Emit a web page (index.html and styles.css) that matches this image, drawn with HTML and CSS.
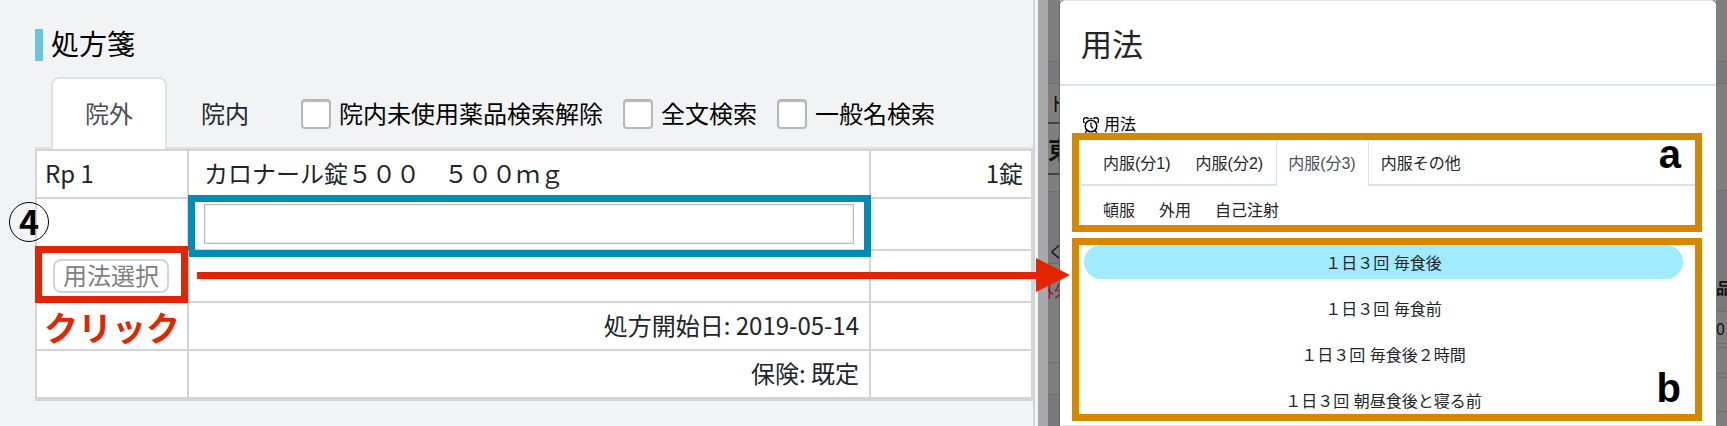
FILE: index.html
```html
<!DOCTYPE html>
<html lang="ja">
<head>
<meta charset="utf-8">
<title>処方箋</title>
<link rel="stylesheet" href="styles.css">
</head>
<body>
<div class="page">
  <section class="rx">
    <h1 class="rx-title">処方箋</h1>
    <div class="rx-bar">
      <div class="rx-tabs" role="tablist">
        <button class="rx-tab rx-tab-active" type="button" role="tab" aria-selected="true">院外</button>
        <button class="rx-tab" type="button" role="tab" aria-selected="false">院内</button>
      </div>
      <div class="checks">
        <label class="check"><input type="checkbox"><span>院内未使用薬品検索解除</span></label>
        <label class="check"><input type="checkbox"><span>全文検索</span></label>
        <label class="check"><input type="checkbox"><span>一般名検索</span></label>
      </div>
    </div>
    <table class="rx-table">
      <colgroup><col class="col-rp"><col><col class="col-amount"></colgroup>
      <tbody>
        <tr><td>Rp 1</td><td class="drug">カロナール錠５００　５００ｍｇ</td><td class="right">1錠</td></tr>
        <tr class="tall"><td></td><td class="drug marked"><input class="drug-input" type="text" aria-label="薬品検索"><span class="frame frame-blue"></span></td><td></td></tr>
        <tr class="tall"><td class="usage-cell marked"><button class="usage-button" type="button">用法選択</button><span class="frame frame-red"></span></td><td></td><td></td></tr>
        <tr><td class="marked"><strong class="click-note">クリック</strong></td><td class="right detail">処方開始日: 2019-05-14</td><td></td></tr>
        <tr><td></td><td class="right detail">保険: 既定</td><td></td></tr>
      </tbody>
    </table>
    <span class="step">4</span>
    <span class="arrow"></span>
  </section>
  <section class="overlay">
    <div class="strip strip-left" aria-hidden="true">
      <span class="seg h62"></span>
      <span class="seg seg-cool h22"></span>
      <span class="seg seg-line h40 size20">ト</span>
      <span class="seg seg-line h51 size24">東</span>
      <span class="seg h17"></span>
      <span class="seg seg-cool seg-end h72">く</span>
      <span class="seg seg-red h99">外外</span>
      <span class="seg h32"></span>
      <span class="seg seg-cool seg-rest"></span>
    </div>
    <div class="modal" role="dialog" aria-labelledby="usage-title">
      <h2 class="modal-title" id="usage-title">用法</h2>
      <div class="modal-body">
        <div class="usage-label">
          <svg class="alarm" viewBox="0 0 16 16" fill="none" stroke="currentColor" stroke-linecap="round">
            <circle cx="8" cy="9" r="5.8" stroke-width="1.5"/>
            <path d="M8 5.8V9.2L9.6 11" stroke-width="1.3"/>
            <path d="M1.2 5.4A2.5 2.5 0 0 1 5.2 1.5M14.8 5.4A2.5 2.5 0 0 0 10.8 1.5M3.9 13.3L2.6 15.3M12.1 13.3L13.4 15.3" stroke-width="1.4"/>
            <path d="M7 1.4H9" stroke-width="1"/>
          </svg>
          用法
        </div>
        <div class="group group-tabs">
          <div class="usage-tabs usage-tabs-top">
            <button class="usage-tab" type="button">内服(分1)</button>
            <button class="usage-tab" type="button">内服(分2)</button>
            <button class="usage-tab usage-tab-active" type="button">内服(分3)</button>
            <button class="usage-tab" type="button">内服その他</button>
          </div>
          <div class="usage-tabs usage-tabs-more">
            <button class="usage-tab" type="button">頓服</button>
            <button class="usage-tab" type="button">外用</button>
            <button class="usage-tab" type="button">自己注射</button>
          </div>
          <b class="mark mark-a">a</b>
        </div>
        <div class="group group-list">
          <button class="usage usage-active" type="button">１日３回 毎食後</button>
          <button class="usage" type="button">１日３回 毎食前</button>
          <button class="usage" type="button">１日３回 毎食後２時間</button>
          <button class="usage" type="button">１日３回 朝昼食後と寝る前</button>
          <b class="mark mark-b">b</b>
        </div>
      </div>
    </div>
    <div class="strip strip-right" aria-hidden="true">
      <span class="seg h62"></span>
      <span class="seg seg-cool h22"></span>
      <span class="seg h107"></span>
      <span class="seg seg-cool seg-end seg-bold h121">品名</span>
      <span class="seg h32">0</span>
      <span class="seg h4"></span>
      <span class="seg h26"></span>
      <span class="seg h4"></span>
      <span class="seg h34"></span>
      <span class="seg seg-rest"></span>
    </div>
  </section>
</div>
</body>
</html>
```

FILE: styles.css
```css
* {
  box-sizing: border-box;
}

body {
  margin: 0;
  background: #f1f3f5;
  color: #212529;
  font-family: "Noto Sans CJK JP", sans-serif;
  font-size: 24px;
}

button {
  margin: 0;
  border: 0;
  padding: 0;
  background: none;
  color: inherit;
  font: inherit;
}

.page {
  display: grid;
  grid-template-columns: minmax(0, 1035fr) minmax(0, 689fr);
  column-gap: 3px;
  min-height: 100vh;
}

/* Prescription */

.rx {
  position: relative;
  z-index: 1;
  padding: 29px 0 25px 35px;
  border-right: 2px solid #ced4da;
}

.rx-title {
  margin: 0 0 16px;
  border-left: 8px solid #6ac6e0;
  padding: 0 0 4px 8px;
  color: #000;
  font-size: 28px;
  font-weight: 400;
  line-height: 28px;
}

.rx-bar {
  display: flex;
  gap: 18px;
  height: 72px;
  padding-left: 16px;
  border-bottom: 2px solid #dee2e6;
}

.rx-tabs {
  display: flex;
  height: 72px;
}

.rx-tab {
  border: 2px solid transparent;
  border-bottom: 0;
  border-radius: 8px 8px 0 0;
  padding: 0 32px 4px;
  white-space: nowrap;
}

.rx-tab-active {
  border-color: #dee2e6;
  background: #fff;
  color: #495057;
}

.checks {
  display: flex;
  align-items: center;
  gap: 20px;
  height: 74px;
  color: #000;
}

.check {
  display: flex;
  align-items: center;
  gap: 8px;
  white-space: nowrap;
}

.check span {
  padding-bottom: 4px;
}

.check input {
  appearance: none;
  width: 30px;
  height: 30px;
  margin: 0;
  border: 2px solid #b5b7b9;
  border-radius: 4px;
  background: #fff;
  box-shadow: inset 0 1px 1px #b5b7b9;
}

.rx-table {
  width: 100%;
  table-layout: fixed;
  border-collapse: separate;
  border-spacing: 0;
  border: solid #d4d4d4;
  border-width: 2px 0 2px 2px;
  background: #fff;
  line-height: 32px;
}

.col-rp {
  width: 152px;
}

.col-amount {
  width: 162px;
}

.rx-table td {
  height: 48px;
  padding: 0 8px 2px;
  border: solid #d4d4d4;
  border-width: 0 2px 2px 0;
  white-space: nowrap;
}

.rx-table .tall td {
  height: 52px;
  padding-bottom: 0;
}

.rx-table .drug {
  padding-right: 15px;
  padding-left: 15px;
}

.rx-table .right {
  text-align: right;
}

.rx-table .detail {
  padding-right: 10px;
}

.rx-table .usage-cell {
  padding-left: 16px;
}

.marked {
  position: relative;
}

.drug-input {
  display: block;
  width: 100%;
  height: 40px;
  border: 1px solid #bbb;
  padding: 0 8px;
  font: inherit;
  box-shadow: inset 0 0 0 1px #eee;
}

.usage-button {
  display: block;
  height: 34px;
  border: 2px solid #ced4da;
  border-radius: 8px;
  padding: 0 8px 2px;
  color: #808080;
  line-height: 28px;
}

.frame {
  position: absolute;
  border: 7px solid;
  pointer-events: none;
}

.frame-blue {
  inset: -4px -2px -8px -1px;
  border-color: #008cb7;
}

.frame-red {
  inset: -5px -1px -2px -2px;
  border-color: #e32400;
}

.click-note {
  position: absolute;
  top: 0;
  left: 7px;
  color: #e32400;
  font-size: 34px;
  line-height: 48px;
}

.step {
  position: absolute;
  top: 202px;
  left: 9px;
  width: 40px;
  height: 40px;
  border: 1px solid #000;
  border-radius: 50%;
  color: #000;
  font-size: 34px;
  font-weight: 700;
  line-height: 36px;
  text-align: center;
}

.arrow {
  position: absolute;
  top: 258px;
  right: -37px;
  left: 197px;
  height: 34px;
  background: #e32400;
  clip-path: polygon(0 14px, calc(100% - 34px) 14px, calc(100% - 34px) 0, 100% 17px, calc(100% - 34px) 100%, calc(100% - 34px) 21px, 0 21px);
}

/* Dimmed page behind the dialog */

.overlay {
  display: grid;
  grid-template-columns: 22px minmax(0, 1fr) 11px;
  background: #fff;
}

.strip {
  display: flex;
  flex-direction: column;
  overflow: hidden;
  background: #7f7f7f;
  color: #111;
  font-size: 16px;
}

.strip-left {
  border-left: 10px solid #a9a9a9;
}

.seg {
  display: flex;
  flex: none;
  align-items: center;
  border-bottom: 1px solid #6d6e70;
  white-space: nowrap;
}

.seg-cool {
  background: #77797c;
}

.seg-line {
  border-bottom: 2px solid #444;
}

.seg-end {
  align-items: flex-end;
}

.seg-red {
  align-items: flex-start;
  justify-content: center;
  padding-top: 16px;
  color: #8a1538;
  line-height: 20px;
}

.seg-bold {
  padding-bottom: 12px;
  font-weight: 700;
}

.seg-rest {
  flex: 1;
  border-bottom: 0;
}

.size20 { font-size: 20px; }
.size24 { font-size: 24px; font-weight: 700; }
.h4 { height: 4px; }
.h17 { height: 17px; }
.h22 { height: 22px; }
.h26 { height: 26px; }
.h32 { height: 32px; }
.h34 { height: 34px; }
.h40 { height: 40px; }
.h51 { height: 51px; }
.h62 { height: 62px; }
.h72 { height: 72px; }
.h99 { height: 99px; }
.h107 { height: 107px; }
.h121 { height: 121px; }

/* Usage dialog */

.modal {
  border: 1px solid #e4e4e4;
  border-width: 1px 0;
  border-radius: 5px 5px 0 0;
  background: #fff;
  box-shadow: 0 0 0 1px #666;
  font-family: "Liberation Sans", "Noto Sans CJK JP", sans-serif;
  font-size: 16px;
}

.modal-title {
  margin: 0;
  padding: 21px 21px 14px;
  border-bottom: 2px solid #dee2e6;
  font-size: 31px;
  font-weight: 400;
  line-height: 48px;
}

.modal-body {
  display: flex;
  flex-direction: column;
  gap: 6px;
  padding: 27px 14px 4px 12px;
}

.usage-label {
  display: flex;
  align-items: center;
  gap: 5px;
  height: 24px;
  padding-left: 11px;
  color: #000;
  line-height: 24px;
}

.alarm {
  width: 16px;
  height: 16px;
}

.group {
  position: relative;
  border: 7px solid #d68700;
}

.group-tabs {
  height: 99px;
  margin-top: -10px;
}

.usage-tabs {
  display: flex;
  height: 46px;
  padding-left: 10px;
  margin-left: 2px;
}

.usage-tabs-top {
  border-bottom: 2px solid #dee2e6;
}

.usage-tab {
  height: 46px;
  border: 1px solid transparent;
  border-width: 0 1px;
  padding: 0 12px 0 11px;
  white-space: nowrap;
}

.usage-tabs-top .usage-tab {
  padding-bottom: 3px;
}

.usage-tabs-more .usage-tab {
  padding-right: 11px;
}

.usage-tab-active {
  border-color: #dee2e6;
  border-radius: 4px 4px 0 0;
  background: #fff;
  color: #495057;
}

.group-list {
  display: flex;
  flex-direction: column;
  gap: 12px;
  height: 183px;
  padding: 0 12px 0 5px;
}

.usage {
  flex: none;
  height: 34px;
  border-radius: 17px;
}

.usage-active {
  background: #a0ebff;
}

.mark {
  position: absolute;
  right: 14px;
  color: #000;
  font-size: 40px;
  line-height: 40px;
}

.mark-a {
  top: -6px;
}

.mark-b {
  bottom: 6px;
}
```
